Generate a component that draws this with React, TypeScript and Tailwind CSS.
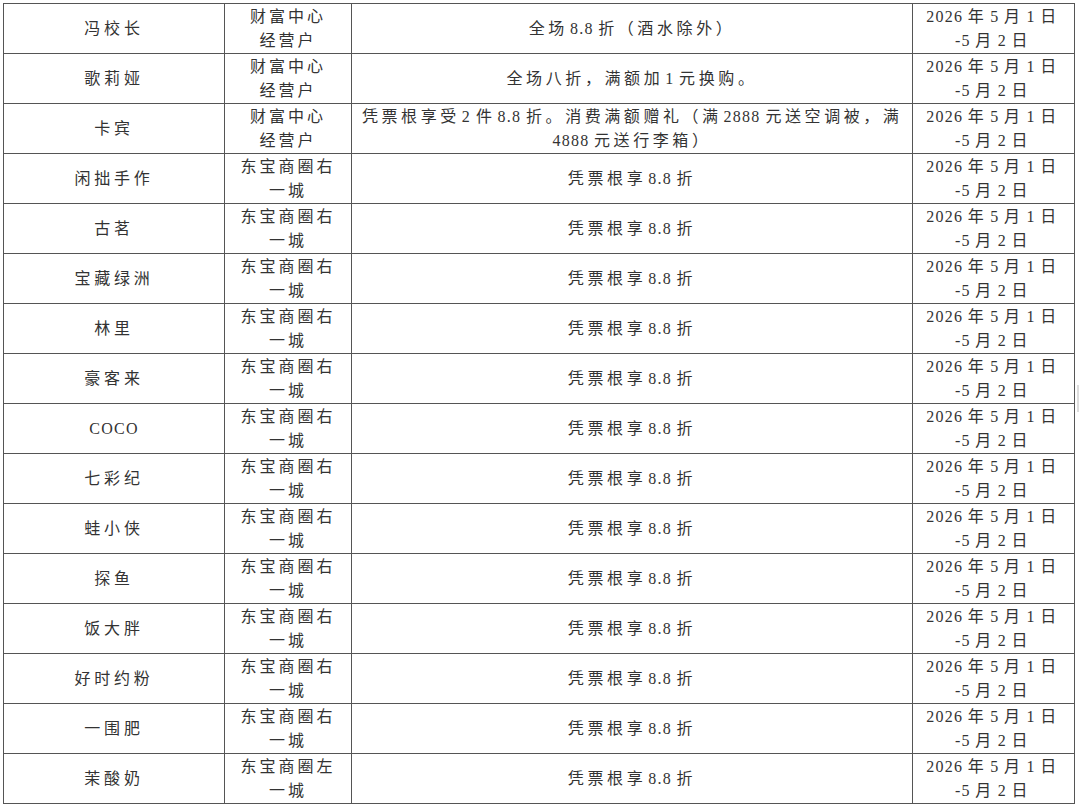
import React from 'react';

interface Row {
  name: string;
  place: [string, string];
  offer: string | [string, string];
}

const wealth: [string, string] = ['财富中心', '经营户'];
const east: [string, string] = ['东宝商圈右', '一城'];

const rows: Row[] = [
  { name: '冯校长', place: wealth, offer: '全场 8.8 折（酒水除外）' },
  { name: '歌莉娅', place: wealth, offer: '全场八折，满额加 1 元换购。' },
  {
    name: '卡宾',
    place: wealth,
    offer: [
      '凭票根享受 2 件 8.8 折。消费满额赠礼（满 2888 元送空调被，满',
      '4888 元送行李箱）',
    ],
  },
  { name: '闲拙手作', place: east, offer: '凭票根享 8.8 折' },
  { name: '古茗', place: east, offer: '凭票根享 8.8 折' },
  { name: '宝藏绿洲', place: east, offer: '凭票根享 8.8 折' },
  { name: '林里', place: east, offer: '凭票根享 8.8 折' },
  { name: '豪客来', place: east, offer: '凭票根享 8.8 折' },
  { name: 'COCO', place: east, offer: '凭票根享 8.8 折' },
  { name: '七彩纪', place: east, offer: '凭票根享 8.8 折' },
  { name: '蛙小侠', place: east, offer: '凭票根享 8.8 折' },
  { name: '探鱼', place: east, offer: '凭票根享 8.8 折' },
  { name: '饭大胖', place: east, offer: '凭票根享 8.8 折' },
  { name: '好时约粉', place: east, offer: '凭票根享 8.8 折' },
  { name: '一围肥', place: east, offer: '凭票根享 8.8 折' },
  { name: '茉酸奶', place: ['东宝商圈左', '一城'], offer: '凭票根享 8.8 折' },
];

// Word-style mixing: latin runs are tight, with small gaps next to CJK chars
const Txt = ({ t }: { t: string }) => {
  const parts = t.split(/([\x20-\x7e]+)/).filter((p) => p !== '');
  return (
    <>
      {parts.map((part, i) => {
        if (!/[\x20-\x7e]/.test(part)) return <span key={i}>{part}</span>;
        const word = part.trim();
        if (!word) return null;
        const before = i > 0;
        const after = i < parts.length - 1;
        return (
          <span
            key={i}
            className={`tracking-[1.25px] ${before ? 'ml-[2px]' : ''} ${
              after ? 'mr-[4.5px]' : ''
            }`}
          >
            {word}
          </span>
        );
      })}
    </>
  );
};

const cell =
  'border border-[#555] text-center align-middle p-0 leading-[24px]';

export default function App() {
  return (
    <div className="relative h-[805px] w-[1080px] overflow-hidden bg-white pl-[3px] pt-[3px] font-['Liberation_Serif','Noto_Sans_CJK_SC',serif] text-[16px] tracking-[3.6px] text-[#333]">
      <table className="table-fixed border-collapse">
        <colgroup>
          <col className="w-[221px]" />
          <col className="w-[127px]" />
          <col className="w-[561px]" />
          <col className="w-[162px]" />
        </colgroup>
        <tbody>
          {rows.map((r, i) => (
            <tr key={i} className="h-[50px]">
              <td className={`${cell} tracking-[3.8px]`}>
                <Txt t={r.name} />
              </td>
              <td className={`${cell} tracking-[3px]`}>
                <span className="block">{r.place[0]}</span>
                <span className="block">{r.place[1]}</span>
              </td>
              <td className={`${cell} px-[10px]`}>
                {typeof r.offer === 'string' ? (
                  <Txt t={r.offer} />
                ) : (
                  <>
                    <span className="block whitespace-nowrap text-justify tracking-[3.2px] [text-align-last:justify]">
                      <Txt t={r.offer[0]} />
                    </span>
                    <span className="block">
                      <Txt t={r.offer[1]} />
                    </span>
                  </>
                )}
              </td>
              <td className={`${cell} tracking-[4.5px]`}>
                <span className="block">
                  <Txt t="2026 年 5 月 1 日" />
                </span>
                <span className="block">
                  <Txt t="-5 月 2 日" />
                </span>
              </td>
            </tr>
          ))}
        </tbody>
      </table>
      <div className="absolute left-[1077px] top-[385px] h-[27px] w-[2px] bg-[#ddd]" />
    </div>
  );
}
